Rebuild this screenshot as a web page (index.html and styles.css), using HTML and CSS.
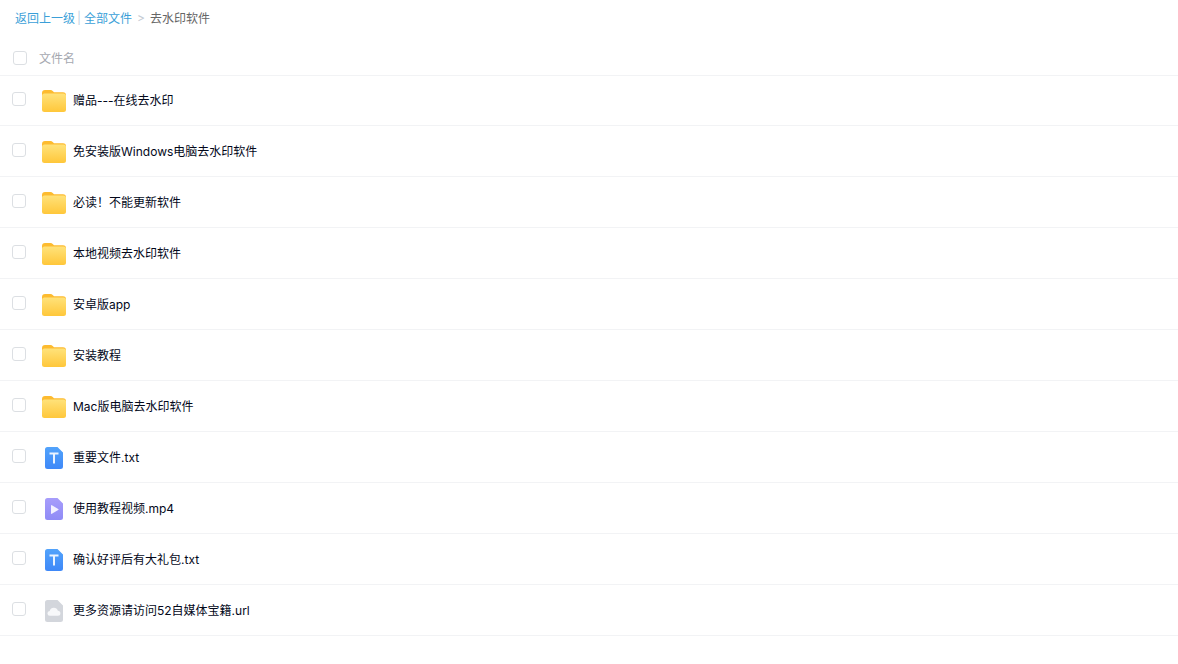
FILE: index.html
```html
<html lang="zh-CN"><head>
    <meta charset="UTF-8">
    <meta name="viewport" content="width=device-width, initial-scale=1.0">
    <title>去水印软件</title>
    <link rel="stylesheet" href="styles.css">
</head>
<body>
    <svg class="icon-defs" width="0" height="0">
        <defs>
            <linearGradient id="folder-front" x1="0" y1="0" x2="0" y2="1">
                <stop offset="0" stop-color="#ffe27a"/>
                <stop offset="1" stop-color="#ffc73a"/>
            </linearGradient>
            <linearGradient id="txt-bg" x1="0" y1="0" x2="0" y2="1">
                <stop offset="0" stop-color="#52a3fb"/>
                <stop offset="1" stop-color="#3e88f8"/>
            </linearGradient>
            <linearGradient id="video-bg" x1="0" y1="0" x2="0" y2="1">
                <stop offset="0" stop-color="#a79dfb"/>
                <stop offset="1" stop-color="#8f8bf6"/>
            </linearGradient>
            <symbol id="icon-folder" viewBox="0 0 24 22">
                <path d="M0 3a3 3 0 0 1 3-3h5.500c1 0 1.600.4 2.200 1l1.300 1.300h9a3 3 0 0 1 3 3V8H0z" fill="#fdbb2f"/>
                <rect x="0" y="3.500" width="24" height="18.500" rx="2.500" fill="url(#folder-front)"/>
            </symbol>
            <symbol id="icon-txt" viewBox="0 0 18 22">
                <path d="M2.500 0H12.500l5.500 5.500v14a2.500 2.500 0 0 1-2.500 2.500h-13A2.500 2.500 0 0 1 0 19.500v-17A2.500 2.500 0 0 1 2.500 0z" fill="url(#txt-bg)"/>
                <path d="M4.500 5.500h9v2H10v9H8v-9H4.500z" fill="#eaf3ff"/>
            </symbol>
            <symbol id="icon-video" viewBox="0 0 18 22">
                <path d="M2.500 0H12.500l5.500 5.500v14a2.500 2.500 0 0 1-2.500 2.500h-13A2.500 2.500 0 0 1 0 19.500v-17A2.500 2.500 0 0 1 2.500 0z" fill="url(#video-bg)"/>
                <path d="M6 7.700v7.600a.6.600 0 0 0 .9.500l6.300-3.800a.6.600 0 0 0 0-1L6.900 7.200a.6.600 0 0 0-.9.500z" fill="#f3f1ff"/>
            </symbol>
            <symbol id="icon-url" viewBox="0 0 18 22">
                <path d="M2.500 0H12.500l5.500 5.500v14a2.500 2.500 0 0 1-2.500 2.500h-13A2.500 2.500 0 0 1 0 19.500v-17A2.500 2.500 0 0 1 2.500 0z" fill="#d3d6dc"/>
                <path d="M5 15.700a2.400 2.400 0 0 1-.3-4.800 4.300 4.300 0 0 1 8.200-.2 2.500 2.500 0 0 1 0 5z" fill="#f7f8fa"/>
            </symbol>
        </defs>
    </svg>

    <div class="breadcrumb">
        <a href="#" class="crumb-link">返回上一级</a>
        <span class="crumb-bar">|</span>
        <a href="#" class="crumb-link">全部文件</a>
        <span class="crumb-sep">&gt;</span>
        <span class="crumb-current">去水印软件</span>
    </div>

    <div class="list-head">
        <span class="check"></span>
        <span class="head-name">文件名</span>
    </div>

    <ul class="file-list">
        <li class="file-row">
            <span class="check"></span>
            <span class="icon-cell"><svg class="icon-folder"><use href="#icon-folder"/></svg></span>
            <span class="file-name">赠品---在线去水印</span>
        </li>
        <li class="file-row">
            <span class="check"></span>
            <span class="icon-cell"><svg class="icon-folder"><use href="#icon-folder"/></svg></span>
            <span class="file-name">免安装版Windows电脑去水印软件</span>
        </li>
        <li class="file-row">
            <span class="check"></span>
            <span class="icon-cell"><svg class="icon-folder"><use href="#icon-folder"/></svg></span>
            <span class="file-name">必读！不能更新软件</span>
        </li>
        <li class="file-row">
            <span class="check"></span>
            <span class="icon-cell"><svg class="icon-folder"><use href="#icon-folder"/></svg></span>
            <span class="file-name">本地视频去水印软件</span>
        </li>
        <li class="file-row">
            <span class="check"></span>
            <span class="icon-cell"><svg class="icon-folder"><use href="#icon-folder"/></svg></span>
            <span class="file-name">安卓版app</span>
        </li>
        <li class="file-row">
            <span class="check"></span>
            <span class="icon-cell"><svg class="icon-folder"><use href="#icon-folder"/></svg></span>
            <span class="file-name">安装教程</span>
        </li>
        <li class="file-row">
            <span class="check"></span>
            <span class="icon-cell"><svg class="icon-folder"><use href="#icon-folder"/></svg></span>
            <span class="file-name">Mac版电脑去水印软件</span>
        </li>
        <li class="file-row">
            <span class="check"></span>
            <span class="icon-cell"><svg class="icon-file"><use href="#icon-txt"/></svg></span>
            <span class="file-name">重要文件.txt</span>
        </li>
        <li class="file-row">
            <span class="check"></span>
            <span class="icon-cell"><svg class="icon-file"><use href="#icon-video"/></svg></span>
            <span class="file-name">使用教程视频.mp4</span>
        </li>
        <li class="file-row">
            <span class="check"></span>
            <span class="icon-cell"><svg class="icon-file"><use href="#icon-txt"/></svg></span>
            <span class="file-name">确认好评后有大礼包.txt</span>
        </li>
        <li class="file-row">
            <span class="check"></span>
            <span class="icon-cell"><svg class="icon-file"><use href="#icon-url"/></svg></span>
            <span class="file-name">更多资源请访问52自媒体宝籍.url</span>
        </li>
    </ul>
</body></html>
```

FILE: styles.css
```css
:root {
    --link-color: #3b9fd8;
    --text-color: #03081a;
    --line-color: #f2f3f5;
    --check-border: #dcdfe3;
}

body {
    font-family: Inter, 'Noto Sans CJK SC', sans-serif;
    font-size: 12px;
    background: #fff;
    color: var(--text-color);
    margin: 0;
}

.icon-defs {
    display: block;
    height: 0;
}

.breadcrumb {
    display: flex;
    align-items: center;
    height: 34px;
    padding-left: 15px;
    color: #666;
}

.crumb-link {
    color: var(--link-color);
    text-decoration: none;
}

.crumb-bar {
    margin: 0 3px 0 2px;
    color: #c3d3df;
}

.crumb-sep {
    margin: 0 5px;
    color: #c4cad3;
}

.crumb-current {
    color: #666;
}

.list-head {
    display: flex;
    align-items: center;
    height: 34px;
    padding: 7px 0 0 13px;
    border-bottom: 1px solid var(--line-color);
    color: #a5a8b0;
}

.check {
    display: block;
    flex: none;
    width: 12px;
    height: 12px;
    border: 1px solid var(--check-border);
    border-radius: 3px;
    background: #fff;
}

.head-name {
    margin: 0 0 2px 12px;
}

.file-list {
    list-style: none;
    margin: 0;
    padding: 0;
}

.file-row {
    display: flex;
    align-items: center;
    height: 49px;
    padding: 1px 0 0 12px;
    border-bottom: 1px solid var(--line-color);
}

.file-row:first-child {
    padding-top: 0;
}

.file-row .check {
    margin-top: -4px;
}

.icon-cell {
    display: flex;
    justify-content: center;
    align-items: center;
    width: 24px;
    margin-left: 16px;
}

.icon-folder {
    display: block;
    width: 24px;
    height: 22px;
}

.icon-file {
    display: block;
    width: 18px;
    height: 22px;
}

.file-name {
    margin-left: 7px;
    line-height: 16px;
}
```
